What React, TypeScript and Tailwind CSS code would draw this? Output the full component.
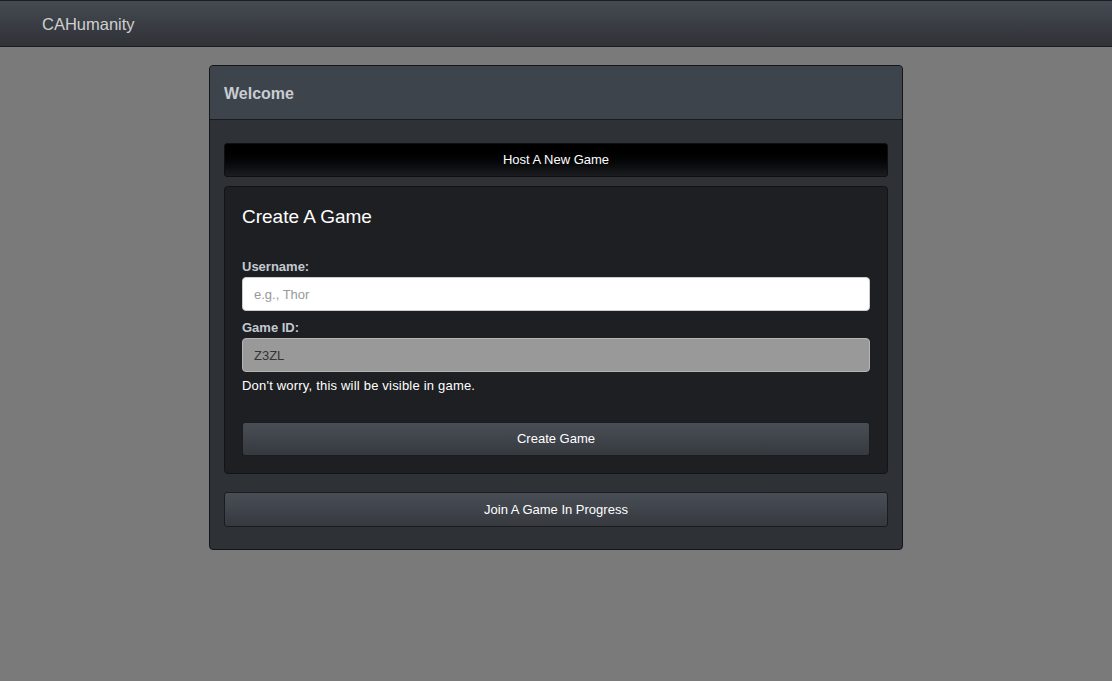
import React from "react";

export default function App() {
  return (
    <div
      className="min-h-[681px] w-full bg-[#7a7a7a]"
      style={{ fontFamily: '"Liberation Sans", Arial, sans-serif' }}
    >
      <div className="h-[47px] border-y border-[#1b1d20] bg-gradient-to-b from-[#454a52] to-[#2f3337] flex items-center">
        <span className="ml-[42px] mt-[2px] text-[16.5px] text-[#cfcfcf] leading-none">CAHumanity</span>
      </div>

      <div className="mx-auto mt-[18px] w-[694px] rounded-[4px] border border-[#141619] bg-[#2e3236] overflow-hidden">
        <div className="h-[54px] border-b border-[#1a1c1f] bg-[#3e444c] flex items-center px-[14px]">
          <span className="mt-[2px] text-[16px] font-bold text-[#c9cdd2]">Welcome</span>
        </div>
        <div className="px-[14px] pt-[23px] pb-[22px]">
          <button className="block h-[34px] w-full rounded-[3px] border border-[#0e0f11] bg-gradient-to-b from-[#000000] to-[#1b1d20] text-[13px] text-white">
            Host A New Game
          </button>
          <div className="mt-[9px] rounded-[4px] border border-[#121315] bg-[#1e1f23] px-[17px] py-[17px]">
            <h3 className="m-0 text-[19px] leading-[26px] text-white">Create A Game</h3>
            <label className="mt-[28px] block text-[13px] font-bold leading-[18px] text-[#c3c9d0]">
              Username:
            </label>
            <input
              className="mt-[1px] block h-[34px] w-full rounded-[4px] border border-[#cccccc] bg-white px-[11px] text-[13px] text-[#555] placeholder:text-[#999] outline-none"
              placeholder="e.g., Thor"
            />
            <label className="mt-[8px] block text-[13px] font-bold leading-[18px] text-[#c3c9d0]">
              Game ID:
            </label>
            <input
              className="mt-[1px] block h-[34px] w-full rounded-[4px] border border-[#b5b5b5] bg-[#999999] px-[11px] text-[13px] text-[#333] outline-none"
              value="Z3ZL"
              readOnly
            />
            <p className="mt-[5px] text-[13px] leading-[18px] tracking-[0.2px] text-white">
              Don't worry, this will be visible in game.
            </p>
            <button className="mt-[27px] block h-[34px] w-full rounded-[3px] border border-[#1a1c1f] bg-gradient-to-b from-[#494e56] to-[#363a3f] text-[13px] text-white">
              Create Game
            </button>
          </div>
          <button className="mt-[18px] block h-[35px] w-full rounded-[3px] border border-[#1a1c1f] bg-gradient-to-b from-[#494e56] to-[#363a3f] text-[13px] text-white">
            Join A Game In Progress
          </button>
        </div>
      </div>
    </div>
  );
}
